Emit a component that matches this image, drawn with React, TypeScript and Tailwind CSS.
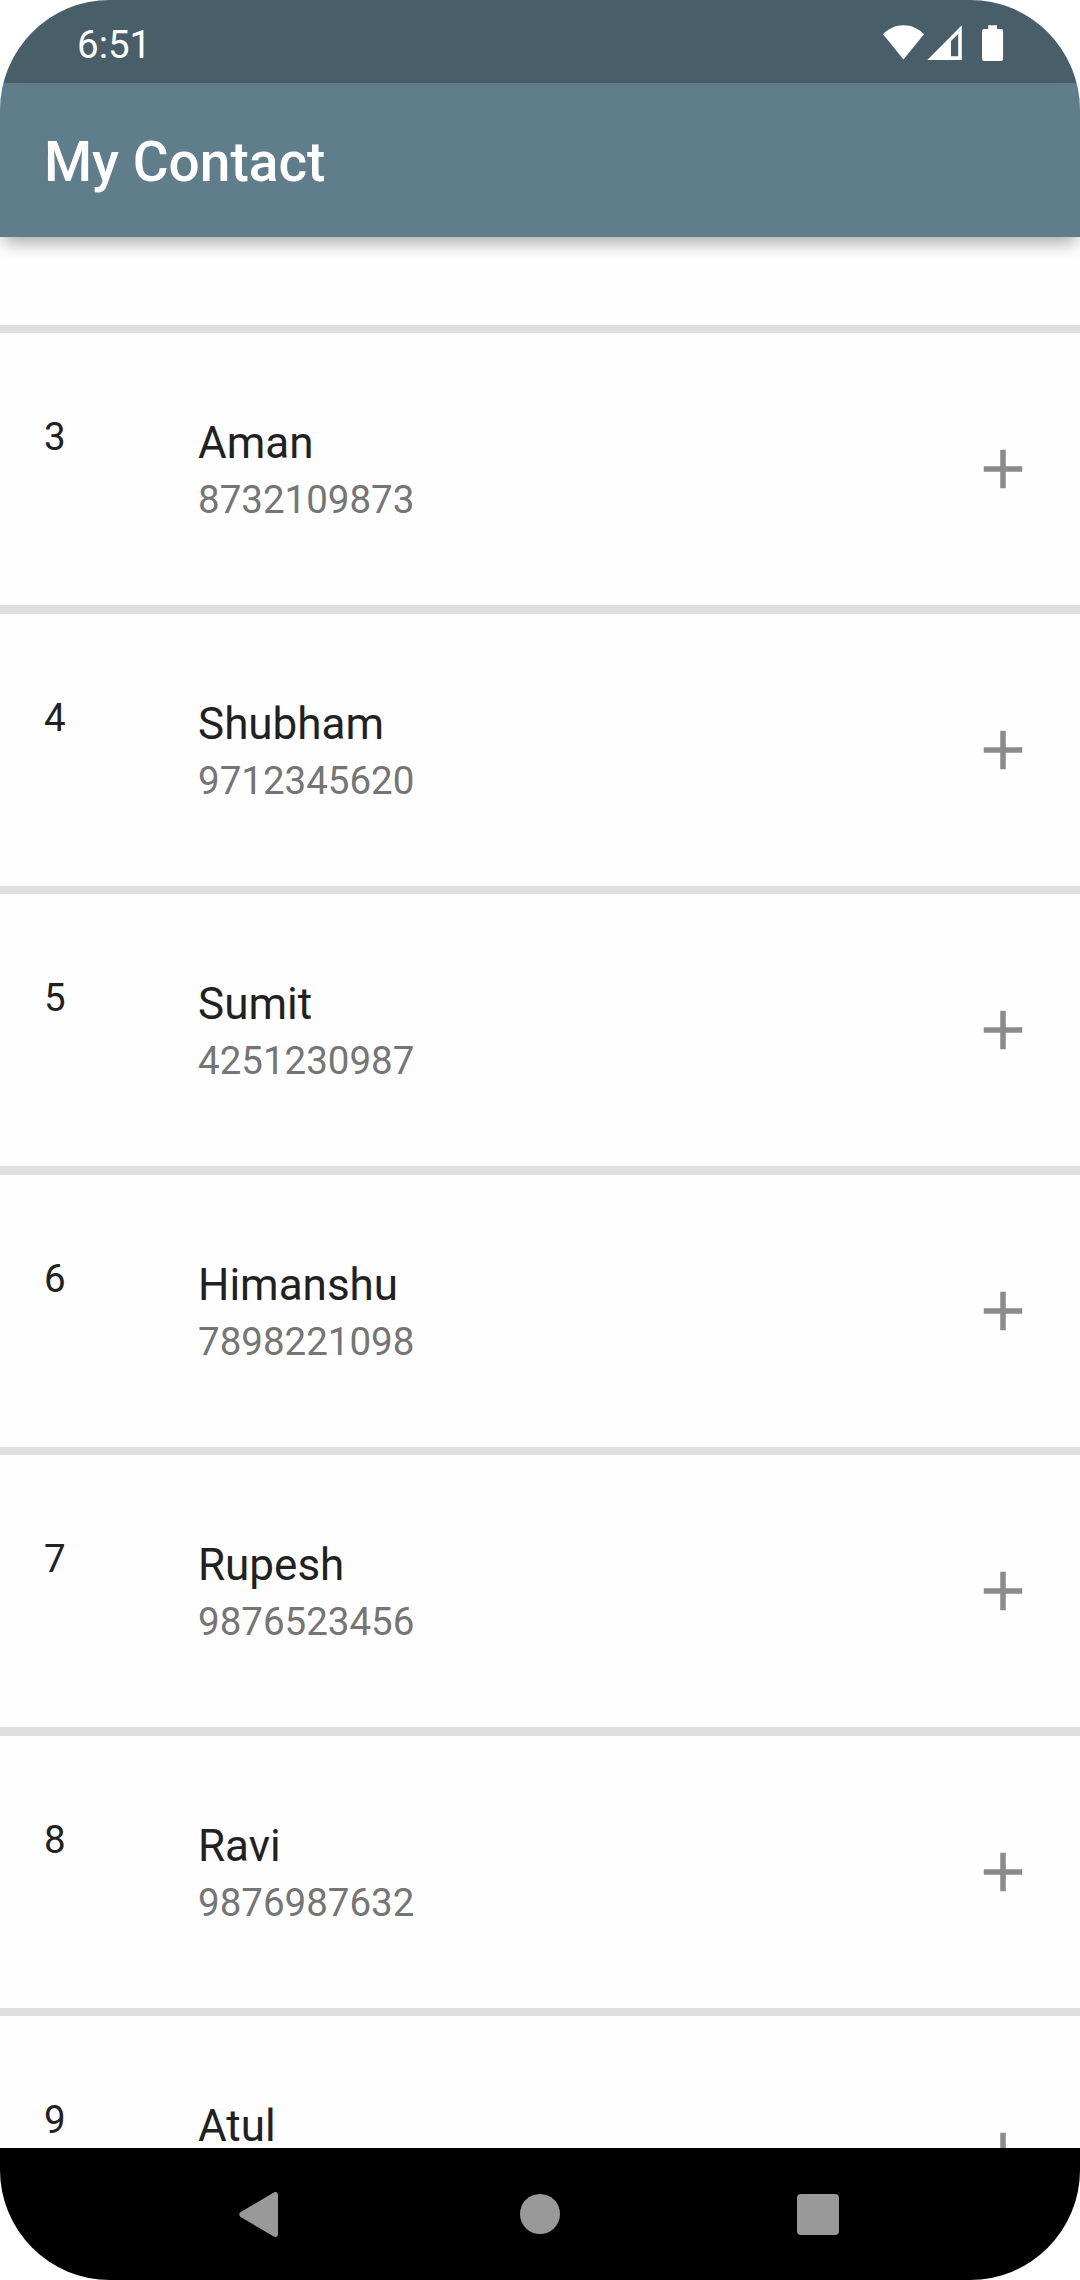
const contacts = [
  { id: 3, name: "Aman", phone: "8732109873" },
  { id: 4, name: "Shubham", phone: "9712345620" },
  { id: 5, name: "Sumit", phone: "4251230987" },
  { id: 6, name: "Himanshu", phone: "7898221098" },
  { id: 7, name: "Rupesh", phone: "9876523456" },
  { id: 8, name: "Ravi", phone: "9876987632" },
  { id: 9, name: "Atul", phone: "" },
];

function StatusBar() {
  return (
    <div className="flex h-[83px] shrink-0 items-start justify-between bg-[#485e68] pl-[77px] pr-[76px] text-white">
      <span className="pt-[22px] text-[38.5px] leading-[45px]">6:51</span>
      <div className="flex items-start pt-[25px]">
        <svg className="h-[36px] w-[42px]" viewBox="0 0 42 36" fill="currentColor">
          <path d="M20.500 34.600 0 9.200C5.200 3.600 12.500 0.200 20.500 0.200S35.800 3.600 41 9.200Z" />
        </svg>
        <svg className="ml-[2px] h-[36px] w-[36px]" viewBox="0 0 36 36" fill="currentColor" fillRule="evenodd">
          <path d="M0.300 35 34.800 0.300V35ZM24 31.200H31.200V9L24 16Z" />
        </svg>
        <svg className="ml-[19px] h-[37px] w-[22px]" viewBox="0 0 22 37" fill="currentColor">
          <path d="M6.200 0.300H15V4H19Q21.100 4 21.100 6V34Q21.100 36 19 36H2Q0 36 0 34V6Q0 4 2 4H6.200Z" />
        </svg>
      </div>
    </div>
  );
}

function ContactRow({ id, name, phone }: { id: number; name: string; phone: string }) {
  return (
    <li className="h-[280.5px] shrink-0">
      <div className="flex h-[272.25px] px-[44px]">
        <span className="w-[154px] pt-[81px] text-[38.5px] leading-[45px] text-[#212121]">{id}</span>
        <div className="flex-1 pt-[84px]">
          <p className="text-[44px] leading-[52px] text-[#212121]">{name}</p>
          {phone && <p className="mt-[8px] text-[38.5px] leading-[45px] text-[#757575]">{phone}</p>}
        </div>
        <button className="flex items-center" aria-label={`Add ${name}`}>
          <svg className="size-[66px]" viewBox="0 0 24 24" fill="#8b8b8b">
            <path d="M19 13h-6v6h-2v-6H5v-2h6V5h2v6h6z" />
          </svg>
        </button>
      </div>
      <div className="h-[8.25px] bg-[#dfdfdf]" />
    </li>
  );
}

function NavigationBar() {
  return (
    <nav className="flex h-[132px] shrink-0 items-start bg-black pl-[239px] text-[#999999]">
      <svg className="mt-[43px] h-[47px] w-[40px]" viewBox="0 0 40 47" fill="currentColor">
        <path d="M1.700 21.100 34.800 1.400C36.800 0.300 39 1.500 39 3.800V43.200C39 45.500 36.800 46.700 34.800 45.600L1.700 26.100C-0.100 25 -0.100 22.200 1.700 21.100Z" />
      </svg>
      <div className="ml-[241px] mt-[45.500px] size-[40px] rounded-full bg-current" />
      <div className="ml-[237px] mt-[45.750px] size-[41.500px] rounded-[4px] bg-current" />
    </nav>
  );
}

export default function App() {
  return (
    <div className="h-[2280px] w-[1080px] bg-white">
      <div className="flex h-full flex-col overflow-hidden rounded-[110px] bg-[#fefefe] font-['Roboto',sans-serif]">
        <StatusBar />
        <header className="relative z-10 flex h-[154px] shrink-0 items-center bg-[#607d8b] px-[44px] pt-[4px] shadow-[0_10px_16px_-4px_rgba(0,0,0,0.33)]">
          <h1 className="text-[55px] font-medium leading-[64px] text-white">My Contact</h1>
        </header>
        <main className="min-h-0 flex-1 overflow-hidden">
          <div className="mt-[87.75px] h-[8.25px] bg-[#dfdfdf]" />
          <ul>
            {contacts.map((c) => (
              <ContactRow key={c.id} {...c} />
            ))}
          </ul>
        </main>
        <NavigationBar />
      </div>
    </div>
  );
}
